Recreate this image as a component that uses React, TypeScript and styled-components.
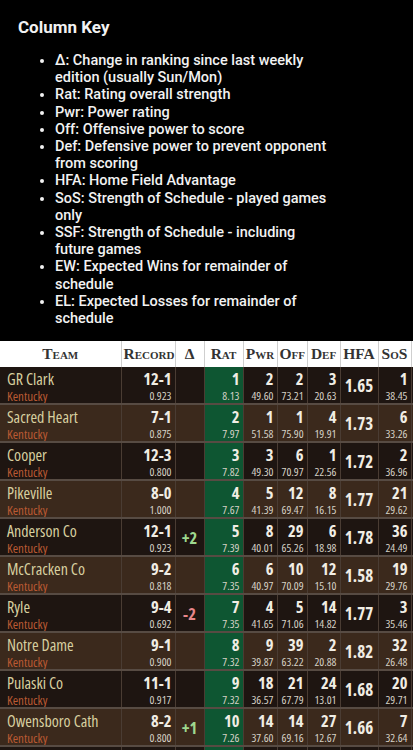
import { createGlobalStyle, styled } from 'styled-components';

type Stat = [number | string, string];

interface TeamRow {
    name: string;
    state: string;
    record: string;
    pct: string;
    delta?: string;
    rat: Stat;
    pwr: Stat;
    off: Stat;
    def: Stat;
    hfa: string;
    sos: Stat;
}

const keyItems = [
    'Δ: Change in ranking since last weekly edition (usually Sun/Mon)',
    'Rat: Rating overall strength',
    'Pwr: Power rating',
    'Off: Offensive power to score',
    'Def: Defensive power to prevent opponent from scoring',
    'HFA: Home Field Advantage',
    'SoS: Strength of Schedule - played games only',
    'SSF: Strength of Schedule - including future games',
    'EW: Expected Wins for remainder of schedule',
    'EL: Expected Losses for remainder of schedule',
];

const rows: TeamRow[] = [
    { name: 'GR Clark', state: 'Kentucky', record: '12-1', pct: '0.923', rat: [1, '8.13'], pwr: [2, '49.60'], off: [2, '73.21'], def: [3, '20.63'], hfa: '1.65', sos: [1, '38.45'] },
    { name: 'Sacred Heart', state: 'Kentucky', record: '7-1', pct: '0.875', rat: [2, '7.97'], pwr: [1, '51.58'], off: [1, '75.90'], def: [4, '19.91'], hfa: '1.73', sos: [6, '33.26'] },
    { name: 'Cooper', state: 'Kentucky', record: '12-3', pct: '0.800', rat: [3, '7.82'], pwr: [3, '49.30'], off: [6, '70.97'], def: [1, '22.56'], hfa: '1.72', sos: [2, '36.96'] },
    { name: 'Pikeville', state: 'Kentucky', record: '8-0', pct: '1.000', rat: [4, '7.67'], pwr: [5, '41.39'], off: [12, '69.47'], def: [8, '16.15'], hfa: '1.77', sos: [21, '29.62'] },
    { name: 'Anderson Co', state: 'Kentucky', record: '12-1', pct: '0.923', delta: '+2', rat: [5, '7.39'], pwr: [8, '40.01'], off: [29, '65.26'], def: [6, '18.98'], hfa: '1.78', sos: [36, '24.49'] },
    { name: 'McCracken Co', state: 'Kentucky', record: '9-2', pct: '0.818', rat: [6, '7.35'], pwr: [6, '40.97'], off: [10, '70.09'], def: [12, '15.10'], hfa: '1.58', sos: [19, '29.76'] },
    { name: 'Ryle', state: 'Kentucky', record: '9-4', pct: '0.692', delta: '-2', rat: [7, '7.35'], pwr: [4, '41.65'], off: [5, '71.06'], def: [14, '14.82'], hfa: '1.77', sos: [3, '35.46'] },
    { name: 'Notre Dame', state: 'Kentucky', record: '9-1', pct: '0.900', rat: [8, '7.32'], pwr: [9, '39.87'], off: [39, '63.22'], def: [2, '20.88'], hfa: '1.82', sos: [32, '26.48'] },
    { name: 'Pulaski Co', state: 'Kentucky', record: '11-1', pct: '0.917', rat: [9, '7.32'], pwr: [18, '36.57'], off: [21, '67.79'], def: [24, '13.01'], hfa: '1.68', sos: [20, '29.71'] },
    { name: 'Owensboro Cath', state: 'Kentucky', record: '8-2', pct: '0.800', delta: '+1', rat: [10, '7.26'], pwr: [14, '37.60'], off: [14, '69.16'], def: [27, '12.67'], hfa: '1.66', sos: [7, '32.64'] },
];

const columns = [
    { label: 'Team', width: 121 },
    { label: 'Record', width: 54 },
    { label: 'Δ', width: 29 },
    { label: 'Rat', width: 39 },
    { label: 'Pwr', width: 34 },
    { label: 'Off', width: 30 },
    { label: 'Def', width: 33 },
    { label: 'HFA', width: 38 },
    { label: 'SoS', width: 33 },
    { label: 'SSF', width: 40 },
];

const StatCell = ({ stat, green }: { stat: Stat; green?: boolean }) => (
    <StyledNumCell $green={green}>
        <StyledBig>{stat[0]}</StyledBig>
        <StyledSmall>{stat[1]}</StyledSmall>
    </StyledNumCell>
);

export default function App() {
    return (
        <>
            <GlobalStyle />
            <StyledKey>
                <StyledKeyTitle>Column Key</StyledKeyTitle>
                <StyledKeyList>
                    {keyItems.map(item => <li key={item}>{item}</li>)}
                </StyledKeyList>
            </StyledKey>
            <StyledTableWrapper>
                <StyledTable>
                    <colgroup>
                        {columns.map(c => <col key={c.label} style={{ width: c.width }} />)}
                    </colgroup>
                    <thead>
                        <tr>
                            {columns.map(c => <StyledHeadCell key={c.label}>{c.label}</StyledHeadCell>)}
                        </tr>
                    </thead>
                    <tbody>
                        {rows.map((r, i) => (
                            <StyledRow key={r.name} $alt={i % 2 === 1}>
                                <StyledTeamCell>
                                    <StyledTeamName>{r.name}</StyledTeamName>
                                    <StyledState>{r.state}</StyledState>
                                </StyledTeamCell>
                                <StatCell stat={[r.record, r.pct]} />
                                <StyledDeltaCell $up={r.delta?.startsWith('+')}>{r.delta}</StyledDeltaCell>
                                <StatCell stat={r.rat} green />
                                <StatCell stat={r.pwr} />
                                <StatCell stat={r.off} />
                                <StatCell stat={r.def} />
                                <StyledHfaCell>{r.hfa}</StyledHfaCell>
                                <StatCell stat={r.sos} />
                                <StyledNumCell />
                            </StyledRow>
                        ))}
                        <StyledRow $alt={false}>
                            <StyledTeamCell />
                            <StyledNumCell />
                            <StyledDeltaCell />
                            <StyledNumCell $green />
                            <StyledNumCell />
                            <StyledNumCell />
                            <StyledNumCell />
                            <StyledHfaCell />
                            <StyledNumCell />
                            <StyledNumCell />
                        </StyledRow>
                    </tbody>
                </StyledTable>
            </StyledTableWrapper>
        </>
    );
}

const GlobalStyle = createGlobalStyle`
    html, body {
        margin: 0;
        background: #000;
    }
    body {
        font-family: Roboto, "Liberation Sans", sans-serif;
    }
`;

const StyledKey = styled.section`
    padding: 17px 0 0 18px;
    color: #f2f2f2;
`;

const StyledKeyTitle = styled.h2`
    margin: 0;
    font-size: 17px;
    line-height: 20px;
    font-weight: 700;
`;

const StyledKeyList = styled.ul`
    width: 276px;
    margin: 15px 0 0;
    padding-left: 37px;
    font-size: 14.5px;
    line-height: 17.2px;
    font-weight: 500;
`;

const StyledTableWrapper = styled.div`
    margin-top: 14px;
    width: 413px;
    overflow: hidden;
`;

const StyledTable = styled.table`
    table-layout: fixed;
    border-collapse: collapse;
    width: 441px;
    font-family: "Open Sans", Lato, sans-serif;
    font-stretch: 85%;
`;

const StyledHeadCell = styled.th`
    background: #fff;
    color: #333;
    height: 26px;
    padding: 0 2px;
    border-right: 1px solid #cfcfcf;
    font-family: "Liberation Serif", serif;
    font-stretch: normal;
    font-variant: small-caps;
    font-weight: 700;
    font-size: 15.5px;
    text-align: center;
    white-space: nowrap;
    overflow: hidden;
`;

const StyledRow = styled.tr<{ $alt: boolean }>`
    height: 36px;
    background: ${({ $alt }) => ($alt ? '#3b291c' : '#1e1511')};
    border-bottom: 2px solid #574b43;
`;

const StyledCell = styled.td`
    padding: 2px 4px 0;
    vertical-align: top;
    border-right: 1px solid #4a3c33;
    white-space: nowrap;
    overflow: hidden;
`;

const StyledTeamCell = styled(StyledCell)`
    padding-left: 7px;
`;

const StyledTeamName = styled.div`
    color: #d8d0a0;
    font-size: 16px;
    line-height: 20px;
`;

const StyledState = styled.div`
    color: #bb5a33;
    font-size: 13px;
    line-height: 14px;
`;

const StyledNumCell = styled(StyledCell)<{ $green?: boolean }>`
    padding-right: 3px;
    text-align: right;
    ${({ $green }) => ($green ? 'background: #0e5632;' : '')}
`;

const StyledBig = styled.div`
    color: #f1ede4;
    font-size: 16.5px;
    line-height: 20px;
    font-weight: 700;
`;

const StyledSmall = styled.div`
    color: #d6d1c6;
    font-size: 11.5px;
    line-height: 14px;
`;

const StyledDeltaCell = styled(StyledCell)<{ $up?: boolean }>`
    padding: 0;
    text-align: center;
    vertical-align: middle;
    font-size: 16.5px;
    font-weight: 700;
    color: ${({ $up }) => ($up ? '#9fd98f' : '#e8868a')};
`;

const StyledHfaCell = styled(StyledCell)`
    padding: 0;
    text-align: center;
    vertical-align: middle;
    color: #f1ede4;
    font-size: 17px;
    font-weight: 700;
`;
